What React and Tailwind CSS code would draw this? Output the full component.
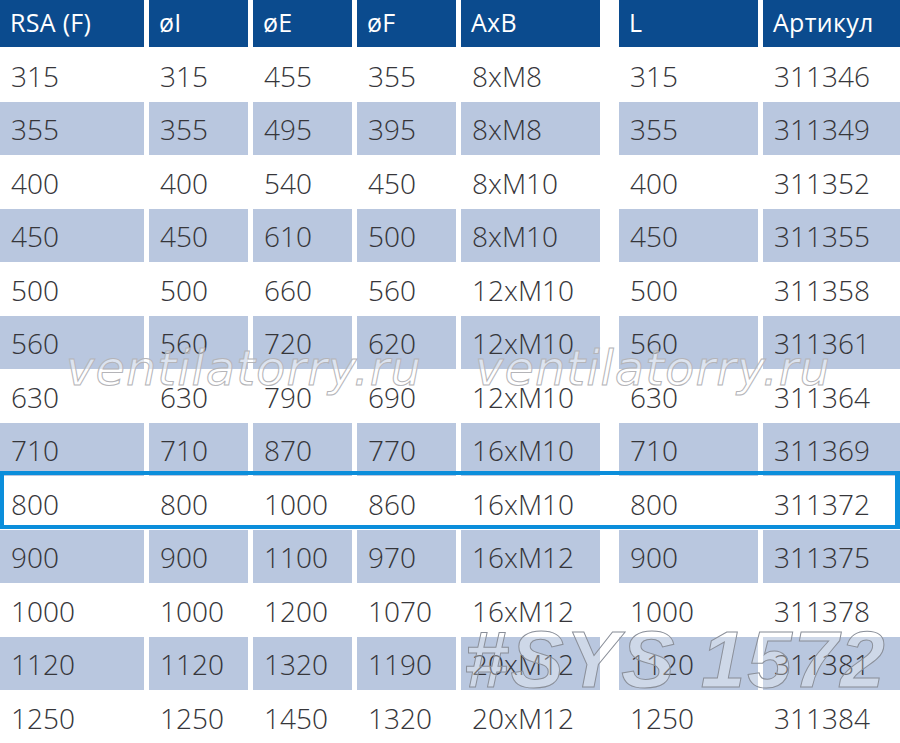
import React from 'react'

const headers = ['RSA (F)', 'øI', 'øE', 'øF', 'AxB', 'L', 'Артикул']

const rows = [
  ['315', '315', '455', '355', '8xM8', '315', '311346'],
  ['355', '355', '495', '395', '8xM8', '355', '311349'],
  ['400', '400', '540', '450', '8xM10', '400', '311352'],
  ['450', '450', '610', '500', '8xM10', '450', '311355'],
  ['500', '500', '660', '560', '12xM10', '500', '311358'],
  ['560', '560', '720', '620', '12xM10', '560', '311361'],
  ['630', '630', '790', '690', '12xM10', '630', '311364'],
  ['710', '710', '870', '770', '16xM10', '710', '311369'],
  ['800', '800', '1000', '860', '16xM10', '800', '311372'],
  ['900', '900', '1100', '970', '16xM12', '900', '311375'],
  ['1000', '1000', '1200', '1070', '16xM12', '1000', '311378'],
  ['1120', '1120', '1320', '1190', '20xM12', '1120', '311381'],
  ['1250', '1250', '1450', '1320', '20xM12', '1250', '311384'],
]

// selected row (800) gets the bright blue frame
const HIGHLIGHT = 8

const gridCols = 'grid grid-cols-[144px_99px_99px_99px_153px_139px_1fr] gap-x-[5px]'

const Row = ({ cells, index }) => {
  const shaded = index % 2 === 1
  return (
    <div className={`relative ${gridCols} h-[53.5px]`}>
      {cells.map((value, i) => (
        <div
          key={i}
          className={`flex items-center pl-[11px] pt-[2px] text-[28px] font-light text-[#36363a] ${
            shaded ? 'bg-[#b9c7df]' : 'bg-white'
          } ${i === 4 ? 'w-[139px]' : ''}`}>
          {value}
        </div>
      ))}
      {index === HIGHLIGHT && (
        <div className="pointer-events-none absolute -top-[5px] bottom-[1px] left-0 right-0 border-[4px] border-r-[5px] border-[#0b8edb]" />
      )}
    </div>
  )
}

const Watermark = ({ className }) => (
  <div
    className={`pointer-events-none absolute top-[344px] font-['DejaVu_Sans',sans-serif] text-[48px] font-extralight italic leading-none tracking-[1px] text-white/50 [-webkit-text-stroke:1px_#b4b4b8] ${className}`}>
    ventilatorry.ru
  </div>
)

export default function App() {
  return (
    <div className="relative h-[743px] w-[900px] overflow-hidden bg-white font-['Open_Sans_Light','Open_Sans',sans-serif]">
      <div className={`${gridCols} h-[47px]`}>
        {headers.map((title, i) => (
          <div
            key={i}
            className={`flex items-center bg-[#0b4b8e] pl-[10px] pb-[1px] font-['Open_Sans',sans-serif] text-[25px] font-medium tracking-[0.3px] text-white ${
              i === 4 ? 'w-[139px]' : ''
            }`}>
            {title}
          </div>
        ))}
      </div>
      <div className="mt-[1px]">
        {rows.map((cells, index) => (
          <Row key={index} cells={cells} index={index} />
        ))}
      </div>

      {/* watermarks over the table */}
      <Watermark className="left-[66px]" />
      <Watermark className="left-[475px]" />
      <div className="pointer-events-none absolute left-[464px] top-[620px] font-['Liberation_Sans',sans-serif] text-[80px] font-bold italic leading-none tracking-[2px] text-white/30 [-webkit-text-stroke:1px_#8a8f99]">
        #SYS 1572
      </div>
    </div>
  )
}
